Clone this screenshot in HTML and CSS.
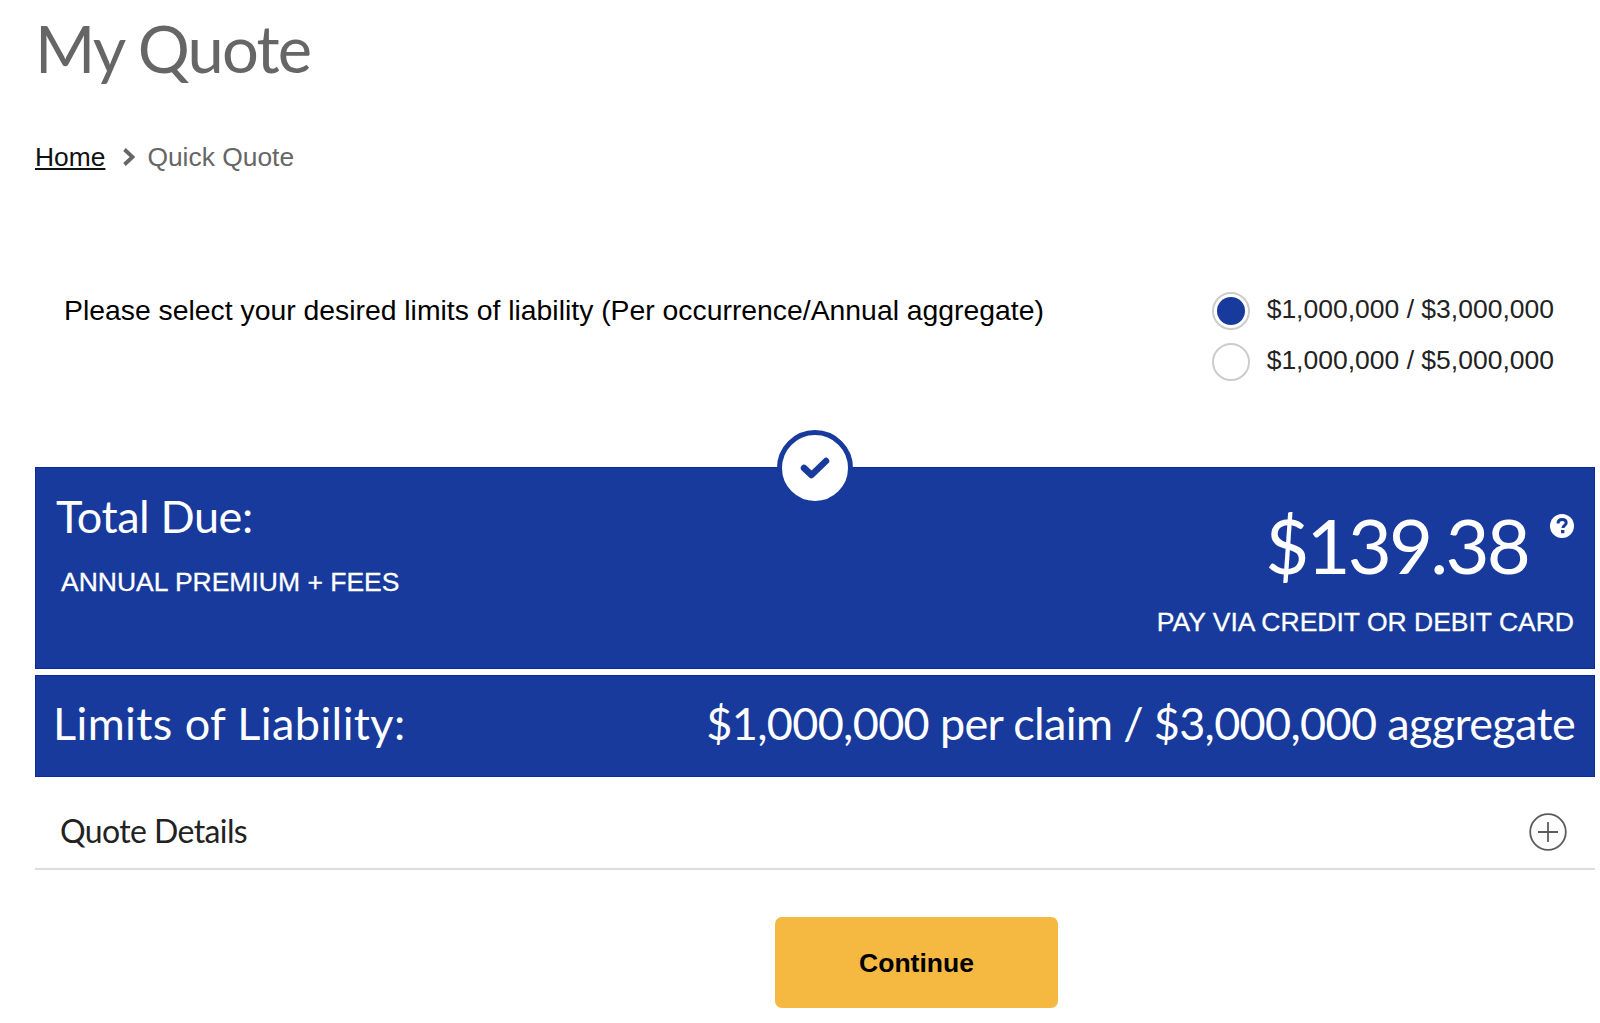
FILE: index.html
```html
<!DOCTYPE html>
<html lang="en">
<head>
  <meta charset="UTF-8">
  <meta name="viewport" content="width=device-width, initial-scale=1.0">
  <title>My Quote</title>
  <link rel="stylesheet" href="styles.css">
</head>
<body>

<h1 class="page-title">My Quote</h1>

<nav class="breadcrumb">
  <a href="#">Home</a>
  <svg class="crumb-arrow" viewBox="0 0 14 18" width="14" height="18"><path d="M2.5 1.5 L10.5 9 L2.5 16.5" fill="none" stroke="#666" stroke-width="3.8"/></svg>
  <span>Quick Quote</span>
</nav>

<section class="limits">
  <p class="limits-text">Please select your desired limits of liability (Per occurrence/Annual aggregate)</p>
  <div class="limits-options">
    <label class="option"><span class="radio checked"></span>$1,000,000 / $3,000,000</label>
    <label class="option"><span class="radio"></span>$1,000,000 / $5,000,000</label>
  </div>
</section>

<div class="total-panel">
  <div class="check-badge">
    <svg viewBox="0 0 30 24" width="30" height="24"><path d="M4 12 L11.5 19 L26 5" fill="none" stroke="#173a9c" stroke-width="6.5" stroke-linecap="round" stroke-linejoin="round"/></svg>
  </div>
  <div class="total-left">
    <div class="total-label">Total Due:</div>
    <div class="total-sub">ANNUAL PREMIUM + FEES</div>
  </div>
  <div class="total-right">
    <div class="total-amount">$139.38<svg class="help-icon" viewBox="0 0 24 24" width="24" height="24"><circle cx="12" cy="12" r="12" fill="#fff"/><path d="M8 9.5 C8 6.8 9.8 5.5 12.2 5.5 C14.6 5.5 16.2 6.9 16.2 8.8 C16.2 11.4 13 11.4 13 14" fill="none" stroke="#173a9c" stroke-width="3"/><rect x="11" y="16" width="3.4" height="3.2" fill="#173a9c"/></svg></div>
    <div class="total-sub">PAY VIA CREDIT OR DEBIT CARD</div>
  </div>
</div>

<div class="limits-panel">
  <span class="limits-label">Limits of Liability:</span>
  <span class="limits-value">$1,000,000 per claim / $3,000,000 aggregate</span>
</div>

<div class="details-row">
  <span class="details-label">Quote Details</span>
  <svg viewBox="0 0 38 38" width="38" height="38"><circle cx="19" cy="19" r="17.8" fill="none" stroke="#5c5c5c" stroke-width="1.8"/><path d="M9 19 H29 M19 9 V29" stroke="#5c5c5c" stroke-width="1.8"/></svg>
</div>

<div class="actions">
  <button class="continue-btn">Continue</button>
</div>

</body>
</html>
```

FILE: styles.css
```css
body {
  margin: 0;
  padding: 0 5px 0 35px;
  background-color: #fff;
  color: #000;
  font-family: "Liberation Sans", Arial, sans-serif;
  overflow: hidden;
}
.page-title {
  margin: 0;
  padding-top: 6px;
  height: 94px;
  font-family: Lato, sans-serif;
  font-size: 65px;
  line-height: 84px;
  font-weight: 400;
  color: #666;
  letter-spacing: -1.8px;
}
.breadcrumb {
  display: flex;
  align-items: center;
  height: 30px;
  margin-top: 42px;
  font-size: 26.4px;
  color: #666;
}
.breadcrumb a {
  color: #111;
}
.crumb-arrow {
  margin: 0 11px 0 17px;
}
.limits {
  display: flex;
  justify-content: space-between;
  height: 177px;
  margin-top: 118px;
  padding-right: 41px;
}
.limits-text {
  margin: 0 0 0 29px;
  font-size: 28.35px;
  line-height: 32px;
  padding-top: 4px;
}
.limits-options {
  display: flex;
  flex-direction: column;
  gap: 13px;
}
.option {
  display: flex;
  align-items: center;
  gap: 17px;
  height: 38px;
  font-size: 26.5px;
  color: #222;
}
.radio {
  width: 34px;
  height: 34px;
  margin-top: 4px;
  border: 2px solid #ccc;
  border-radius: 50%;
  background: #fff;
  position: relative;
}
.radio.checked::after {
  content: "";
  position: absolute;
  left: 3px;
  top: 3px;
  width: 28px;
  height: 28px;
  border-radius: 50%;
  background-color: #173a9c;
}
.total-panel {
  position: relative;
  display: flex;
  justify-content: space-between;
  height: 202px;
  box-sizing: border-box;
  padding: 0 20px;
  background-color: #173a9c;
  color: #fff;
  border: 1px solid #0a2aa0;
}
.check-badge {
  position: absolute;
  left: 741px;
  top: -38px;
  width: 66px;
  height: 66px;
  display: flex;
  align-items: center;
  justify-content: center;
  background-color: #fff;
  border: 5px solid #173a9c;
  border-radius: 50%;
}
.total-label {
  margin-top: 20px;
  font-family: Lato, sans-serif;
  font-size: 45px;
  line-height: 56px;
  letter-spacing: -0.4px;
}
.total-left .total-sub {
  margin: 22px 0 0 5px;
}
.total-sub {
  font-size: 26.5px;
  line-height: 32px;
  -webkit-text-stroke: 0.3px #fff;
}
.total-right {
  text-align: right;
}
.total-amount {
  margin-top: 29px;
  font-family: Lato, sans-serif;
  font-size: 76px;
  line-height: 96px;
  letter-spacing: -2.8px;
}
.help-icon {
  margin-left: 22px;
  vertical-align: 36px;
}
.total-right .total-sub {
  margin-top: 13px;
}
.limits-panel {
  display: flex;
  justify-content: space-between;
  align-items: center;
  height: 102px;
  box-sizing: border-box;
  margin-top: 6px;
  padding: 0 19px 6px 17px;
  background-color: #173a9c;
  color: #fff;
  border: 1px solid #0a2aa0;
  font-family: Lato, sans-serif;
  font-size: 45px;
}
.limits-label {
  letter-spacing: 0.4px;
}
.limits-value {
  letter-spacing: -0.65px;
}
.details-row {
  display: flex;
  justify-content: space-between;
  align-items: center;
  height: 93px;
  box-sizing: border-box;
  padding: 18px 28px 0 25px;
  border-bottom: 2px solid #ddd;
  font-family: Lato, sans-serif;
  font-size: 32px;
  color: #222;
}
.details-label {
  margin-bottom: 2px;
  letter-spacing: -0.6px;
}
.actions {
  display: flex;
  justify-content: center;
  margin-top: 47px;
  padding-left: 203px;
}
.continue-btn {
  width: 283px;
  height: 91px;
  padding-top: 2px;
  border: none;
  border-radius: 7px;
  background-color: #f5b841;
  color: #000;
  font-family: "Liberation Sans", Arial, sans-serif;
  font-size: 26.5px;
  font-weight: bold;
}
```
